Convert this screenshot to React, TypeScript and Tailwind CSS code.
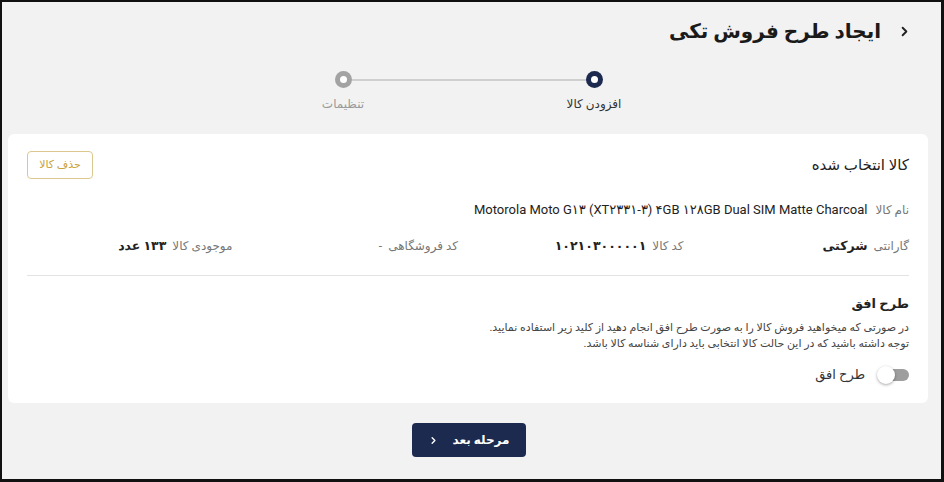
const font = { fontFamily: '"Roboto", "DejaVu Sans", "Noto Sans", sans-serif' }

function Chevron({ className }: { className: string }) {
  return (
    <svg viewBox="0 0 24 24" className={className} fill="none" stroke="currentColor" strokeWidth={3} strokeLinecap="round" strokeLinejoin="round">
      <path d="M9 6l6 6-6 6" />
    </svg>
  )
}

function Stepper() {
  return (
    <div className="flex justify-center pr-[6px]" dir="ltr">
      <div className="relative flex w-[335px] justify-between">
        <div className="absolute left-[42px] right-[42px] top-[8px] h-[2px] bg-[#cfcfcf]" />
        <div className="relative flex w-[84px] flex-col items-center">
          <span className="flex h-[17px] w-[17px] items-center justify-center rounded-full bg-[#a3a3a3]">
            <span className="h-[7px] w-[7px] rounded-full bg-white" />
          </span>
          <span className="mt-[7px] text-[12px] text-[#9a9a9a]">تنظیمات</span>
        </div>
        <div className="relative flex w-[84px] flex-col items-center">
          <span className="flex h-[17px] w-[17px] items-center justify-center rounded-full bg-[#1b2a4e]">
            <span className="h-[7px] w-[7px] rounded-full bg-white" />
          </span>
          <span className="mt-[7px] text-[12px] text-[#333]">افزودن کالا</span>
        </div>
      </div>
    </div>
  )
}

function Field({ label, value, bold }: { label: string; value: string; bold?: boolean }) {
  return (
    <div className="flex items-center gap-[6px]">
      <span className="text-[12px] text-[#777]">{label}</span>
      <span className={bold ? "text-[12.5px] font-bold text-[#222]" : "text-[12px] text-[#777]"}>{value}</span>
    </div>
  )
}

export default function App() {
  return (
    <div
      dir="rtl"
      style={font}
      className="flex h-[482px] w-[944px] flex-col overflow-hidden border-t-2 border-l-2 border-r-[3px] border-b-[3px] border-[#111] bg-[#f2f2f2]"
    >
      {/* Header */}
      <div className="flex items-center gap-[16px] pr-[29px] pt-[13px]">
        <span dir="ltr" className="flex">
          <Chevron className="h-[15px] w-[15px] text-[#222]" />
        </span>
        <h1 className="text-[20px] font-bold leading-[32px] text-[#1a1a1a]">ایجاد طرح فروش تکی</h1>
      </div>

      <div className="mt-[24px]">
        <Stepper />
      </div>

      {/* Card */}
      <div className="ml-[6px] mr-[13px] mt-[21px] rounded-[6px] bg-white px-[19px] pb-[19px] pt-[17px]">
        <div className="flex items-center justify-between">
          <h2 className="text-[15px] text-[#222]">کالا انتخاب شده</h2>
          <button className="h-[28px] w-[66px] rounded-[4px] border border-[#dcc78e] text-[11px] text-[#c9a43a]">
            حذف کالا
          </button>
        </div>

        <div className="mt-[21px] flex items-center gap-[8px]">
          <span className="text-[12px] text-[#777]">نام کالا</span>
          <span className="text-[13px] text-[#222]" dir="ltr">
            Motorola Moto G۱۳ (XT۲۳۳۱-۳) ۴GB ۱۲۸GB Dual SIM Matte Charcoal
          </span>
        </div>

        <div className="mt-[17px] grid grid-cols-4 gap-x-[20px]">
          <Field label="گارانتی" value="شرکتی" bold />
          <Field label="کد کالا" value="۱۰۲۱۰۳۰۰۰۰۰۱" bold />
          <Field label="کد فروشگاهی" value="-" />
          <Field label="موجودی کالا" value="۱۳۳ عدد" bold />
        </div>

        <div className="mt-[20px] h-px bg-[#e3e3e3]" />

        <h3 className="mt-[18px] text-[13px] font-semibold text-[#222]">طرح افق</h3>
        <p className="mt-[6px] text-[11px] leading-[16px] text-[#444]">
          در صورتی که میخواهید فروش کالا را به صورت طرح افق انجام دهید از کلید زیر استفاده نمایید.
          <br />
          توجه داشته باشید که در این حالت کالا انتخابی باید دارای شناسه کالا باشد.
        </p>

        <div className="mt-[13px] flex items-center gap-[12px]">
          <div className="relative h-[18px] w-[32px]">
            <div className="absolute left-[3px] right-0 top-[3px] h-[12px] rounded-full bg-[#9e9e9e]" />
            <div className="absolute left-0 top-0 h-[18px] w-[18px] rounded-full bg-white shadow-[0_1px_3px_rgba(0,0,0,0.35)]" />
          </div>
          <span className="text-[13px] text-[#333]">طرح افق</span>
        </div>
      </div>

      {/* Footer button */}
      <div className="mt-[20px] flex justify-center pr-[6px]">
        <button className="flex h-[34px] w-[114px] items-center justify-center gap-[14px] rounded-[4px] bg-[#1b2a4e] text-[12px] font-bold text-white">
          مرحله بعد
          <span dir="ltr" className="flex">
            <Chevron className="h-[11px] w-[11px]" />
          </span>
        </button>
      </div>
    </div>
  )
}
